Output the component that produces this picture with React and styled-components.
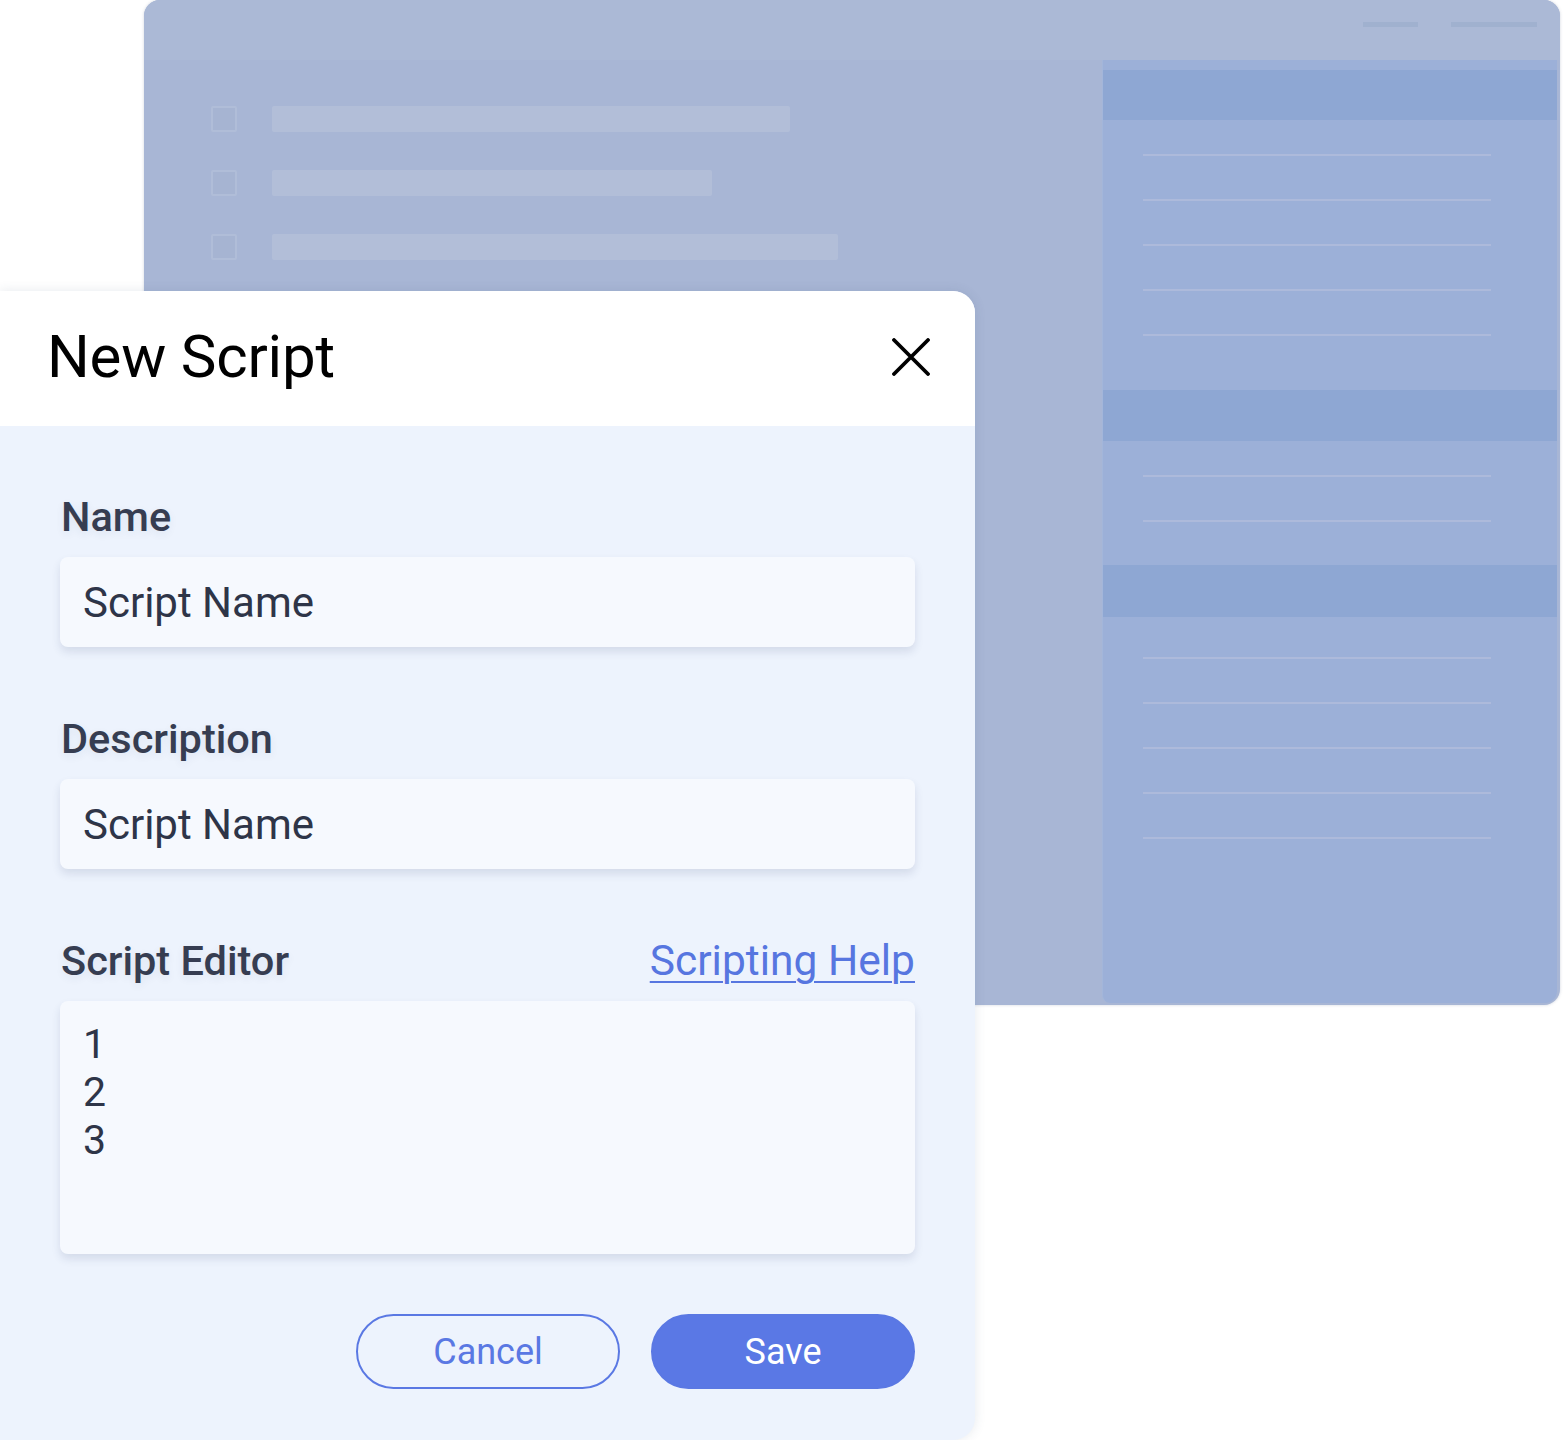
import styled, { createGlobalStyle } from 'styled-components'

const Global = createGlobalStyle`
  html, body {
    margin: 0;
    padding: 0;
    background: #ffffff;
    font-family: Roboto, "Liberation Sans", sans-serif;
  }
`

const Stage = styled.div`
  width: 1563px;
  height: 1440px;
  display: grid;
  overflow: hidden;
  > * {
    grid-area: 1 / 1;
  }
`

/* ---------- background window ---------- */

const Window = styled.div`
  margin-left: 144px;
  width: 1416px;
  height: 1005px;
  border-radius: 16px;
  background: #a8b6d5;
  display: flex;
  flex-direction: column;
  overflow: hidden;
  box-shadow: 0 0 3px rgba(60, 80, 120, 0.25);
`

const TopBar = styled.div`
  height: 60px;
  flex-shrink: 0;
  background: #abb9d6;
  display: flex;
  justify-content: flex-end;
  align-items: flex-start;
  gap: 33px;
  padding: 22px 23px 0 0;
  box-sizing: border-box;
`

const TopDash = styled.div`
  width: ${(p) => p.w}px;
  height: 5px;
  background: #a0b1cf;
`

const WindowBody = styled.div`
  flex: 1;
  display: flex;
  min-height: 0;
`

const ListArea = styled.div`
  flex: 1;
  display: flex;
  flex-direction: column;
  gap: 38px;
  padding: 46px 0 0 67px;
`

const ListRow = styled.div`
  display: flex;
  align-items: center;
  gap: 35px;
`

const Check = styled.div`
  width: 22px;
  height: 22px;
  border: 2px solid #b0bdd8;
  background: #a6b4d2;
  border-radius: 2px;
`

const Bar = styled.div`
  width: ${(p) => p.w}px;
  height: 26px;
  background: #b2bed8;
  border-radius: 2px;
`

const SidePanel = styled.div`
  width: 454px;
  margin: 0 3px 2px 0;
  padding-top: 10px;
  background: #9cb0d8;
  border-left: 1px solid #a3b6da;
  border-radius: 0 0 12px 8px;
  display: flex;
  flex-direction: column;
`

const PanelHeader = styled.div`
  height: ${(p) => p.h}px;
  background: #8ea7d3;
`

const LineGroup = styled.div`
  display: flex;
  flex-direction: column;
  gap: 43px;
  padding: ${(p) => p.top}px 0 ${(p) => p.bottom}px 40px;
`

const PanelLine = styled.div`
  width: 348px;
  height: 2px;
  background: #adbadb;
`

/* ---------- dialog ---------- */

const Dialog = styled.div`
  margin-top: 291px;
  width: 975px;
  height: 1149px;
  border-radius: 0 22px 22px 0;
  background: #edf3fd;
  display: flex;
  flex-direction: column;
  overflow: hidden;
  box-shadow: 0 0 12px rgba(50, 70, 110, 0.12);
`

const DialogHeader = styled.div`
  height: 135px;
  flex-shrink: 0;
  box-sizing: border-box;
  background: #ffffff;
  display: flex;
  align-items: center;
  justify-content: space-between;
  padding: 0 44px 4px 47px;
`

const Title = styled.h1`
  margin: 0;
  font-size: 60px;
  font-weight: 400;
  color: #000;
  letter-spacing: -0.2px;
`

const CloseButton = styled.button`
  border: none;
  background: none;
  padding: 0;
  width: 40px;
  height: 40px;
  display: flex;
  align-items: center;
  justify-content: center;
  cursor: pointer;
`

const DialogBody = styled.div`
  flex: 1;
  padding: 67px 60px 0 60px;
  display: flex;
  flex-direction: column;
`

const Field = styled.div`
  display: flex;
  flex-direction: column;
  gap: 16px;
  margin-bottom: 68px;
`

const LabelRow = styled.div`
  display: flex;
  justify-content: space-between;
  align-items: baseline;
`

const Label = styled.label`
  font-size: 41.5px;
  line-height: 48px;
  font-weight: 500;
  color: #363d51;
  padding-left: 1px;
  text-shadow: 0 3px 8px rgba(40, 60, 100, 0.08);
`

const HelpLink = styled.a`
  font-size: 42.5px;
  line-height: 48px;
  color: #5776e0;
  text-decoration: underline;
  text-decoration-thickness: 2px;
  text-underline-offset: 6px;
`

const Input = styled.div`
  height: 90px;
  border-radius: 8px;
  background: #f6f9fe;
  box-shadow: 0 5px 9px rgba(45, 65, 105, 0.13);
  display: flex;
  align-items: center;
  padding-left: 23px;
  font-size: 42px;
  color: #2e3548;
`

const Editor = styled.div`
  height: 253px;
  border-radius: 8px;
  background: #f6f9fe;
  box-shadow: 0 5px 9px rgba(45, 65, 105, 0.13);
  padding: 19px 23px;
  box-sizing: border-box;
  display: flex;
  flex-direction: column;
  font-size: 41px;
  line-height: 48px;
  color: #2e3548;
`

const Actions = styled.div`
  display: flex;
  justify-content: flex-end;
  gap: 31px;
  margin-top: -8px;
`

const PillButton = styled.button`
  width: 264px;
  height: 75px;
  border-radius: 40px;
  box-sizing: border-box;
  font-family: Roboto, "Liberation Sans", sans-serif;
  font-size: 36px;
  font-weight: 400;
  cursor: pointer;
  border: 2px solid #5a78e3;
  background: ${(p) => (p.primary ? '#5a78e5' : 'transparent')};
  color: ${(p) => (p.primary ? '#ffffff' : '#5a78e3')};
`

function BackgroundWindow() {
  return (
    <Window>
      <TopBar>
        <TopDash w={55} />
        <TopDash w={86} />
      </TopBar>
      <WindowBody>
        <ListArea>
          {[518, 440, 566].map((w, i) => (
            <ListRow key={i}>
              <Check />
              <Bar w={w} />
            </ListRow>
          ))}
        </ListArea>
        <SidePanel>
          <PanelHeader h={50} />
          <LineGroup top={34} bottom={54}>
            {[0, 1, 2, 3, 4].map((i) => <PanelLine key={i} />)}
          </LineGroup>
          <PanelHeader h={51} />
          <LineGroup top={34} bottom={43}>
            {[0, 1].map((i) => <PanelLine key={i} />)}
          </LineGroup>
          <PanelHeader h={52} />
          <LineGroup top={40} bottom={0}>
            {[0, 1, 2, 3, 4].map((i) => <PanelLine key={i} />)}
          </LineGroup>
        </SidePanel>
      </WindowBody>
    </Window>
  )
}

export default function App() {
  return (
    <>
      <Global />
      <Stage>
        <BackgroundWindow />
        <Dialog>
          <DialogHeader>
            <Title>New Script</Title>
            <CloseButton aria-label="Close">
              <svg width="38" height="38" viewBox="0 0 38 38">
                <path d="M2 2 L36 36 M36 2 L2 36" stroke="#000" strokeWidth="3.8" strokeLinecap="round" />
              </svg>
            </CloseButton>
          </DialogHeader>
          <DialogBody>
            <Field>
              <Label>Name</Label>
              <Input>Script Name</Input>
            </Field>
            <Field>
              <Label>Description</Label>
              <Input>Script Name</Input>
            </Field>
            <Field>
              <LabelRow>
                <Label>Script Editor</Label>
                <HelpLink href="#">Scripting Help</HelpLink>
              </LabelRow>
              <Editor>
                <span>1</span>
                <span>2</span>
                <span>3</span>
              </Editor>
            </Field>
            <Actions>
              <PillButton>Cancel</PillButton>
              <PillButton primary>Save</PillButton>
            </Actions>
          </DialogBody>
        </Dialog>
      </Stage>
    </>
  )
}
